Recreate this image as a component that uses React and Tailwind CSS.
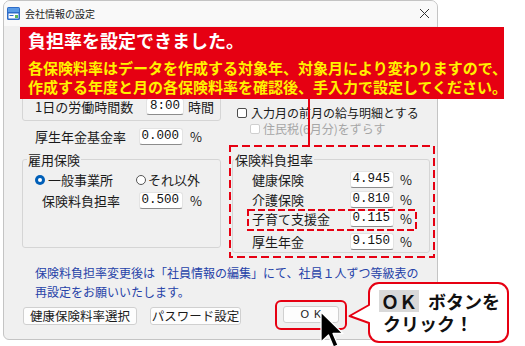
const NUM = "font-['Liberation_Mono',monospace] text-[12.5px]";

function NumBox({ value, w = "w-[44px]" }) {
  return (
    <div
      className={`${w} h-[17px] bg-white border border-[#e3e3e3] border-b-[#8c8c8c] rounded-[3px] text-right pr-[3px] leading-[15px] ${NUM} text-[#111]`}
    >
      {value}
    </div>
  );
}

function Check({ disabled }) {
  return (
    <span
      className={`inline-block shrink-0 w-[10px] h-[10px] rounded-[2px] bg-white border ${
        disabled ? "border-[#cfcfcf]" : "border-[#4d4d4d]"
      }`}
    />
  );
}

function Window() {
  return (
    <div className="ml-[3px] w-[435px] h-[340px] border border-[#c4c4c4] rounded-t-[7px] rounded-b-[6px] bg-[#f0f0f0] flex flex-col overflow-hidden">
      {/* title bar */}
      <div className="h-[25px] shrink-0 flex items-center bg-[#f9f9f9] pl-[3px]">
        <svg width="13" height="13" viewBox="0 0 13 13">
          <rect x="0" y="0" width="13" height="13" rx="1.5" fill="#2e6cc8" />
          <rect x="1" y="1" width="11" height="4" fill="#5a9be6" />
          <rect x="1.5" y="6.5" width="10" height="5" fill="#ffffff" />
          <rect x="8" y="8" width="3" height="3" fill="#5cb85c" />
          <rect x="2.5" y="8" width="4" height="1" fill="#2e6cc8" />
        </svg>
        <span className="ml-[5px] text-[10px] leading-none text-[#222]">会社情報の設定</span>
        <svg className="ml-auto mr-[7px]" width="11" height="11" viewBox="0 0 11 11">
          <path d="M1 1L10 10M10 1L1 10" stroke="#333" strokeWidth="1" />
        </svg>
      </div>

      {/* client */}
      <div className="flex-1 pl-[18px] text-[13px] text-[#1a1a1a]">
        <div className="flex items-start">
          {/* left column */}
          <div className="w-[199px] flex flex-col">
            <div className="mt-[4px] h-[91px] border border-[#d5d5d5] rounded-[3px] flex flex-col justify-end pb-[5px] pl-[12px]">
              <div className="flex items-center h-[17px]">
                <span className="w-[111px] leading-[17px]">1日の労働時間数</span>
                <NumBox value="8:00" w="w-[38px]" />
                <span className="ml-[4px] leading-[17px]">時間</span>
              </div>
            </div>

            <div className="mt-[7px] h-[17px] pl-[13px] flex items-center">
              <span className="w-[104px] leading-[17px]">厚生年金基金率</span>
              <NumBox value="0.000" />
              <span className="ml-[7px] leading-[17px]">%</span>
            </div>

            <fieldset className="mt-[6px] h-[97px] border border-[#d5d5d5] rounded-[3px]">
              <legend className="ml-[4px] px-[1px] leading-[17px]">雇用保険</legend>
              <div className="mt-[4px] h-[16px] pl-[12px] flex items-center">
                <div className="w-[101px] flex items-center">
                  <span className="w-[10px] h-[10px] rounded-full bg-[#005fb8] flex items-center justify-center">
                    <span className="w-[4px] h-[4px] rounded-full bg-white" />
                  </span>
                  <span className="ml-[3px] leading-[16px]">一般事業所</span>
                </div>
                <span className="w-[10px] h-[10px] rounded-full border border-[#555] bg-white" />
                <span className="ml-[2px] leading-[16px]">それ以外</span>
              </div>
              <div className="mt-[4px] h-[17px] pl-[19px] flex items-center">
                <span className="w-[97px] leading-[17px]">保険料負担率</span>
                <NumBox value="0.500" />
                <span className="ml-[7px] leading-[17px]">%</span>
              </div>
            </fieldset>
          </div>

          {/* right column */}
          <div className="ml-[8px] w-[205px] flex flex-col pt-[58px] text-[12px]">
            <div className="h-[16px] pl-[8px] flex items-center whitespace-nowrap">
              <Check />
              <span className="ml-[4px] leading-[16px]">給与明細の支給月を翌月とする</span>
            </div>
            <div className="mt-[5px] h-[16px] pl-[8px] flex items-center whitespace-nowrap">
              <Check />
              <span className="ml-[4px] leading-[16px]">入力月の前月の給与明細とする</span>
            </div>
            <div className="h-[16px] pl-[21px] flex items-center text-[#a6a6a6] whitespace-nowrap">
              <Check disabled />
              <span className="ml-[3px] leading-[16px]">住民税(6月分)をずらす</span>
            </div>

            <fieldset className="mt-[14px] ml-[3px] w-[198px] border border-[#d5d5d5] rounded-[3px] pb-[2px] text-[13px]">
              <legend className="ml-[1px] px-[1px] leading-[17px]">保険料負担率</legend>
              <div className="mt-[3px] h-[17px] pl-[19px] flex items-center">
                <span className="w-[98px] leading-[17px]">健康保険</span>
                <NumBox value="4.945" />
                <span className="ml-[6px] leading-[17px]">%</span>
              </div>
              <div className="mt-[3px] h-[17px] pl-[19px] flex items-center">
                <span className="w-[98px] leading-[17px]">介護保険</span>
                <NumBox value="0.810" />
                <span className="ml-[6px] leading-[17px]">%</span>
              </div>
              <div className="mt-[2px] h-[17px] pl-[19px] flex items-center">
                <span className="w-[98px] leading-[17px]">子育て支援金</span>
                <NumBox value="0.115" />
                <span className="ml-[6px] leading-[17px]">%</span>
              </div>
              <div className="mt-[6px] h-[17px] pl-[19px] flex items-center">
                <span className="w-[98px] leading-[17px]">厚生年金</span>
                <NumBox value="9.150" />
                <span className="ml-[6px] leading-[17px]">%</span>
              </div>
            </fieldset>
          </div>
        </div>

        {/* notice */}
        <div className="mt-[10px] pl-[13px] text-[12px] leading-[19px] text-[#2642a8] whitespace-nowrap">
          保険料負担率変更後は「社員情報の編集」にて、社員１人ずつ等級表の
          <br />
          再設定をお願いいたします。
        </div>

        {/* buttons */}
        <div className="mt-[6px] flex items-start text-[12.5px]">
          <div className="ml-[1px] w-[114px] h-[18px] bg-[#fdfdfd] border border-[#d0d0d0] rounded-[3px] flex items-center justify-center leading-[16px]">
            健康保険料率選択
          </div>
          <div className="ml-[13px] w-[91px] h-[18px] bg-[#fdfdfd] border border-[#d0d0d0] rounded-[3px] flex items-center justify-center leading-[16px]">
            パスワード設定
          </div>
          <div className="ml-[42px] -mt-[1px] w-[56px] h-[17px] bg-[#fdfdfd] border border-[#d0d0d0] rounded-[3px] flex items-center justify-center font-['Liberation_Sans',sans-serif] text-[11px] tracking-[5px] pl-[5px] leading-[15px]">
            OK
          </div>
        </div>
      </div>
    </div>
  );
}

function Annotations() {
  return (
    <>
      {/* banner */}
      <div className="absolute left-[20px] top-[27px] w-[484px] h-[72px] bg-[#e60012] pl-[8px] font-['Noto_Sans_CJK_JP',sans-serif] whitespace-nowrap">
        <div className="mt-[1px] text-[18px] font-bold leading-[24px] text-white">負担率を設定できました。</div>
        <div className="mt-[6px] text-[15px] font-bold leading-[19px] text-[#fff100]">
          各保険料率はデータを作成する対象年、対象月により変わりますので、
        </div>
        <div className="text-[15px] font-bold leading-[19px] text-[#fff100]">
          作成する年度と月の各保険料率を確認後、手入力で設定してください。
        </div>
      </div>

      {/* connector */}
      <div className="absolute left-[308px] top-[99px] w-[2px] h-[46px] bg-[#e60012]" />

      {/* dashed boxes */}
      <svg className="absolute left-[229px] top-[145px]" width="206" height="113" viewBox="0 0 206 113">
        <rect x="1" y="1" width="204" height="111" fill="none" stroke="#e60012" strokeWidth="2" strokeDasharray="8 4" />
      </svg>
      <svg className="absolute left-[247px] top-[209px]" width="170" height="22" viewBox="0 0 170 22">
        <rect x="1" y="1" width="168" height="20" fill="none" stroke="#e60012" strokeWidth="2" strokeDasharray="7 3" />
      </svg>

      {/* OK highlight */}
      <div className="absolute left-[275px] top-[300px] w-[72px] h-[30px] border-2 border-[#e60012] rounded-[6px]" />

      {/* callout */}
      <svg className="absolute left-[348px] top-[281px]" width="163" height="63" viewBox="0 0 163 63">
        <path
          d="M31 2 H150 A10 10 0 0 1 160 12 V51 A10 10 0 0 1 150 61 H31 A10 10 0 0 1 21 51 V42 L1.5 35 L21 24 V12 A10 10 0 0 1 31 2 Z"
          fill="#ffffff"
          stroke="#e60012"
          strokeWidth="2"
          strokeLinejoin="round"
        />
      </svg>
      <div className="absolute left-[379px] top-[290px] font-['Noto_Sans_CJK_JP',sans-serif] font-bold text-[18px] leading-[22px] text-[#111] whitespace-nowrap">
        <div className="flex items-center h-[22px]">
          <span className="bg-[#d9d9d9] px-[2px]">ＯＫ</span>
          <span className="ml-[9px]">ボタンを</span>
        </div>
        <div className="ml-[4px]">クリック！</div>
      </div>

      {/* cursor */}
      <svg className="absolute left-[320px] top-[311px]" width="26" height="40" viewBox="0 0 26 40">
        <path
          d="M1 1 L1 31 L8.5 24 L13.5 36 L18 34 L13 22.5 L23 22.5 Z"
          fill="#000"
          stroke="#fff"
          strokeWidth="1.3"
          strokeLinejoin="round"
        />
      </svg>
    </>
  );
}

export default function App() {
  return (
    <div className="relative w-[525px] h-[346px] overflow-hidden bg-white font-['Noto_Sans_CJK_JP',sans-serif] text-[#1a1a1a]">
      <Window />
      <Annotations />
    </div>
  );
}
